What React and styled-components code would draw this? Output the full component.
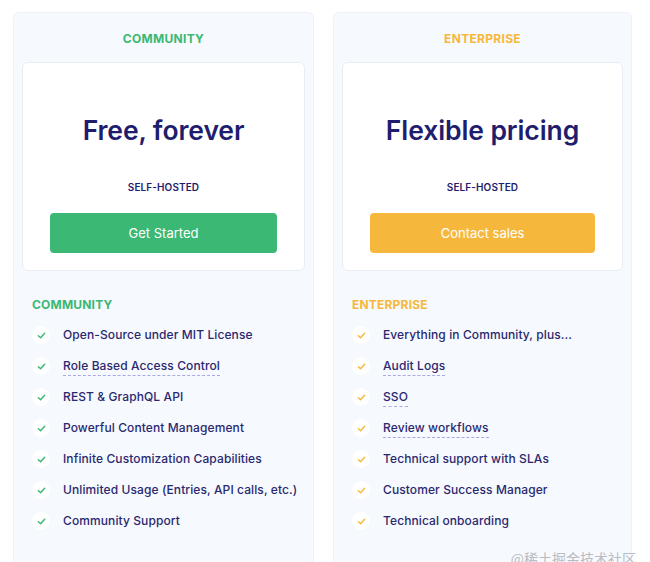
import React from "react";
import styled, { createGlobalStyle } from "styled-components";

const GlobalStyle = createGlobalStyle`
  html, body {
    margin: 0;
    padding: 0;
    background: #ffffff;
    font-family: Inter, "Noto Sans", sans-serif;
    overflow: hidden;
  }
`;

const COLORS = {
  green: "#3bb873",
  yellow: "#f6b83c",
  navy: "#1f1d6d",
  text: "#2a2870",
};

const Page = styled.div`
  position: relative;
  width: 650px;
  height: 562px;
  overflow: hidden;
  padding: 12px 13px 0;
  box-sizing: border-box;
  display: grid;
  grid-template-columns: 301px 299px;
  column-gap: 19px;
`;

const Panel = styled.section`
  background: #f6f9fd;
  border: 1px solid #eef2f8;
  border-radius: 6px;
  padding: 18px 8px 0;
  height: 600px;
  box-sizing: border-box;
`;

const PlanLabel = styled.div`
  text-align: center;
  font-size: 12px;
  font-weight: 700;
  letter-spacing: 0.3px;
  color: ${({ $color }) => $color};
  line-height: 16px;
`;

const Card = styled.div`
  margin-top: 15px;
  background: #ffffff;
  border: 1px solid #e9edf3;
  border-radius: 6px;
  padding: 49px 27px 17px;
  display: flex;
  flex-direction: column;
  align-items: center;
`;

const Price = styled.h2`
  margin: 0;
  font-size: 26.5px;
  font-weight: 600;
  line-height: 36px;
  color: ${COLORS.navy};
  letter-spacing: -0.1px;
`;

const Hosting = styled.div`
  margin-top: 33px;
  font-size: 10px;
  font-weight: 600;
  color: ${COLORS.navy};
  line-height: 12px;
  letter-spacing: 0.1px;
`;

const CtaButton = styled.button`
  margin-top: 20px;
  width: 100%;
  height: 40px;
  border: none;
  border-radius: 4px;
  background: ${({ $color }) => $color};
  color: #ffffff;
  font-family: inherit;
  font-size: 13px;
  font-weight: 400;
  cursor: pointer;
`;

const Features = styled.div`
  padding: 26px 10px 0;
`;

const FeaturesTitle = styled.div`
  font-size: 12px;
  font-weight: 700;
  color: ${({ $color }) => $color};
  line-height: 16px;
  letter-spacing: 0.2px;
`;

const List = styled.ul`
  list-style: none;
  margin: 12px 0 0;
  padding: 0;
  display: flex;
  flex-direction: column;
  gap: 11px;
`;

const Item = styled.li`
  display: flex;
  align-items: center;
  gap: 13px;
  height: 20px;
`;

const CheckDot = styled.span`
  width: 18px;
  height: 18px;
  border-radius: 50%;
  background: #ffffff;
  display: inline-flex;
  align-items: center;
  justify-content: center;
  flex-shrink: 0;
`;

const ItemText = styled.span`
  font-size: 12px;
  color: ${COLORS.text};
  font-weight: 500;
  line-height: 18px;
  white-space: nowrap;
  letter-spacing: 0.1px;
  border-bottom: ${({ $dashed }) => ($dashed ? "1px dashed #a9a8e6" : "1px solid transparent")};
`;

const Watermark = styled.div`
  position: absolute;
  right: 14px;
  bottom: -6px;
  font-size: 14px;
  color: #b9bcc4;
  font-family: "Noto Sans CJK SC", sans-serif;
`;

function Check({ color }) {
  return (
    <CheckDot>
      <svg width="9" height="9" viewBox="0 0 10 10" fill="none">
        <path d="M1.5 5.2 L4 7.5 L8.5 2.5" stroke={color} strokeWidth="1.6" strokeLinecap="round" strokeLinejoin="round" />
      </svg>
    </CheckDot>
  );
}

const plans = [
  {
    label: "COMMUNITY",
    color: COLORS.green,
    price: "Free, forever",
    cta: "Get Started",
    features: [
      { text: "Open-Source under MIT License" },
      { text: "Role Based Access Control", dashed: true },
      { text: "REST & GraphQL API" },
      { text: "Powerful Content Management" },
      { text: "Infinite Customization Capabilities" },
      { text: "Unlimited Usage (Entries, API calls, etc.)" },
      { text: "Community Support" },
    ],
  },
  {
    label: "ENTERPRISE",
    color: COLORS.yellow,
    price: "Flexible pricing",
    cta: "Contact sales",
    features: [
      { text: "Everything in Community, plus..." },
      { text: "Audit Logs", dashed: true },
      { text: "SSO", dashed: true },
      { text: "Review workflows", dashed: true },
      { text: "Technical support with SLAs" },
      { text: "Customer Success Manager" },
      { text: "Technical onboarding" },
    ],
  },
];

export default function App() {
  return (
    <>
      <GlobalStyle />
      <Page>
        {plans.map((plan) => (
          <Panel key={plan.label}>
            <PlanLabel $color={plan.color}>{plan.label}</PlanLabel>
            <Card>
              <Price>{plan.price}</Price>
              <Hosting>SELF-HOSTED</Hosting>
              <CtaButton $color={plan.color}>{plan.cta}</CtaButton>
            </Card>
            <Features>
              <FeaturesTitle $color={plan.color}>{plan.label}</FeaturesTitle>
              <List>
                {plan.features.map((f) => (
                  <Item key={f.text}>
                    <Check color={plan.color} />
                    <ItemText $dashed={f.dashed}>{f.text}</ItemText>
                  </Item>
                ))}
              </List>
            </Features>
          </Panel>
        ))}
        <Watermark>@稀土掘金技术社区</Watermark>
      </Page>
    </>
  );
}
